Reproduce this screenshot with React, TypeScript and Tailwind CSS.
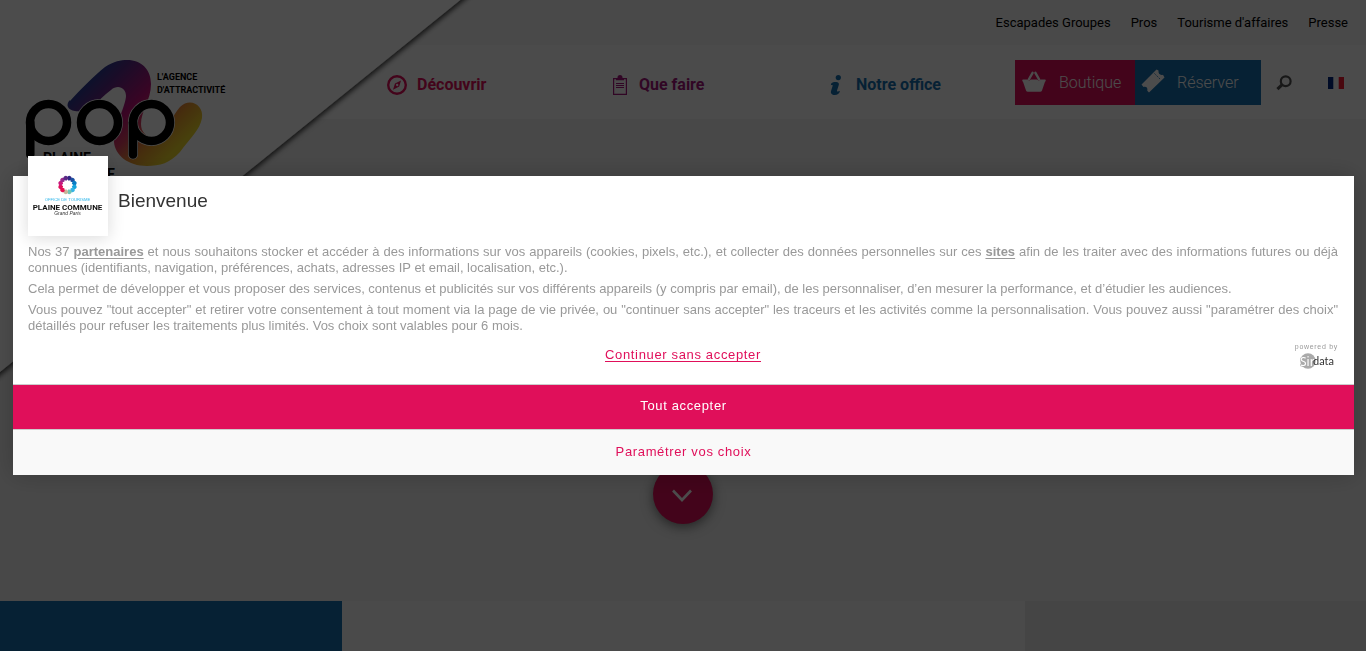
import type { ReactNode } from "react";

const topLinks = ["Escapades Groupes", "Pros", "Tourisme d'affaires", "Presse"];

const petals = [
  "#312783",
  "#1d4fa0",
  "#0a7cc4",
  "#16a3dc",
  "#35b4e5",
  "#72c3b5",
  "#c9b79a",
  "#e5104f",
  "#e00f5a",
  "#c9187c",
  "#9a2a8c",
  "#5b2a86"
];

export default function App() {
  return (
    <div className="relative flex min-h-screen flex-col overflow-hidden bg-[#f0f0f0] font-['Roboto',sans-serif]">
      <Header />
      <main className="flex flex-1 flex-col">
        <section className="flex min-h-[482px] items-end justify-center pb-[77px]">
          <button
            type="button"
            aria-label="Descendre"
            className="flex size-[60px] items-center justify-center rounded-full bg-[#e00f5a] shadow-[0_3px_12px_rgba(0,0,0,0.5)]"
          >
            <svg viewBox="0 0 20 14" className="mt-1 mr-0.5 h-3.5 w-5" fill="none" stroke="#fff" strokeWidth="2.6">
              <path d="M1 1.5 10 11 19 1.5" />
            </svg>
          </button>
        </section>
        <section className="grid flex-1 grid-cols-4">
          <div className="bg-[#176fae]" />
          <div className="col-span-2 bg-[#f9f9f9]" />
          <div className="bg-[#e8e8e8]" />
        </section>
      </main>
      <ConsentDialog />
    </div>
  );
}

function Header() {
  return (
    <header>
      <div className="flex h-[45px] items-center justify-end gap-5 bg-[#f5f5f5] pr-[18px] text-[13px] text-black">
        {topLinks.map((label) => (
          <a key={label} href="#">
            {label}
          </a>
        ))}
      </div>
      <div className="flex h-[74px] items-center bg-[#fbfbfb] pt-px">
        <nav className="flex flex-1 items-center justify-between pt-1 pr-[74px] pl-[387px] text-base font-bold">
          <NavLink label="Découvrir" className="gap-[10px] text-[#e00f5a]">
            <svg viewBox="0 0 20 20" className="size-5">
              <circle cx="10" cy="10" r="8.8" fill="none" stroke="currentColor" strokeWidth="2.4" />
              <path
                fill="currentColor"
                fillRule="evenodd"
                d="M14 5.5 12.2 11.6 6 14.8 8 8.4ZM10.1 8.8a1.2 1.2 0 1 0 .1 2.4 1.2 1.2 0 0 0-.1-2.4Z"
              />
            </svg>
          </NavLink>
          <NavLink label="Que faire" className="gap-[11px] text-[#a3177c]">
            <svg viewBox="0 0 16 20" className="h-5 w-4" fill="none" stroke="currentColor">
              <path strokeWidth="1.2" d="M1.600 3.600h12.800v15.800H1.600Z" />
              <path fill="currentColor" stroke="none" d="M4 5.200V3.300h1.500V2.500A2.500 2.500 0 0 1 10.500 2.500v.8H12v1.900Z" />
              <path strokeWidth="1" d="M4 8.500h8M4 10.500h8M4 12.500h8" />
            </svg>
          </NavLink>
          <NavLink label="Notre office" className="gap-[14px] text-[#176fae]">
            <svg viewBox="0 0 12 20" className="h-5 w-3" fill="currentColor">
              <circle cx="8.3" cy="2.6" r="2.6" />
              <path d="M1.2 8.5C3 6.800 5.500 6.700 7.500 7.200 9.500 7.800 9 9.700 8.400 11.300L7 15.400c-.3 1.100.8 1.300 3 .6-.6 2.600-2.700 4-5.200 4-3 0-4.500-1.600-3.700-4.200L2.600 11c.3-1-.4-1.200-1.800-.8Z" />
            </svg>
          </NavLink>
        </nav>
        <a href="#" className="flex h-[45px] w-[120px] items-center gap-[13px] bg-[#e00f5a] pl-[7px] text-base font-light text-white">
          <svg viewBox="0 0 24 22" className="mb-0.5 h-[22px] w-6">
            <path
              fill="#fff"
              d="M1 8.500h4.500c.5 1.500 2.500 1.500 3.200 0h6.600c.7 1.500 2.700 1.500 3.200 0H23c1 0 1 2 0 2.200L20 19.500a2 2 0 0 1-1.900 1.300H5.900A2 2 0 0 1 4 19.500L1 10.700C0 10.500 0 8.500 1 8.500Z"
            />
            <path fill="none" stroke="#fff" strokeWidth="2.400" strokeLinecap="round" d="M6.800 8.500 10.600 1.800M17.200 8.500 13.400 1.800" />
          </svg>
          Boutique
        </a>
        <a href="#" className="flex h-[45px] w-[126px] items-center gap-3 bg-[#176fae] pl-[6px] text-base font-light text-white">
          <svg viewBox="0 0 24 24" className="mb-1 size-6">
            <path
              fill="#fff"
              d="M15.500.5 17.500 1.500C17 4.500 19.200 6.700 22 5.700L23.500 8.500 8 23.500 6.300 21.800C6.800 19 5.500 17.300 2.500 18L.5 15.500Z"
            />
            <path fill="none" stroke="#176fae" strokeWidth="1" strokeDasharray="1.500 1.500" d="m13.500 4.500 6 6" />
          </svg>
          Réserver
        </a>
        <button type="button" aria-label="Rechercher" className="ml-[15px]">
          <svg viewBox="0 0 16 16" className="size-4" fill="none" stroke="#505050">
            <circle cx="9.700" cy="6.200" r="4.900" strokeWidth="2.200" />
            <path strokeWidth="3" d="M6.200 9.600 1.400 14.200" />
          </svg>
        </button>
        <a href="#" aria-label="Français" className="mr-[22px] ml-9">
          <svg viewBox="0 0 16 12" className="h-3 w-4">
            <path fill="#fff" d="M0 0h16v12H0Z" />
            <path fill="#00267f" d="M0 0h5.300v12H0Z" />
            <path fill="#f31830" d="M10.700 0H16v12h-5.300Z" />
          </svg>
        </a>
      </div>
      <Brand />
    </header>
  );
}

function NavLink({ label, className, children }: { label: string; className: string; children: ReactNode }) {
  return (
    <a href="#" className={`flex items-center ${className}`}>
      {children}
      {label}
    </a>
  );
}

/* White corner with the agency logo, laid over the header and the hero */
function Brand() {
  return (
    <a href="#" aria-label="POP, l'agence d'attractivité" className="absolute top-0 left-0">
      <svg viewBox="0 0 480 390" className="h-[390px] w-[480px]">
        <defs>
          <linearGradient id="ribbon" gradientUnits="userSpaceOnUse" x1="85" y1="85" x2="162" y2="162">
            <stop offset="0" stopColor="#2b3a92" />
            <stop offset="0.15" stopColor="#5b2a86" />
            <stop offset="0.45" stopColor="#c0107a" />
            <stop offset="0.62" stopColor="#d8405f" />
            <stop offset="0.8" stopColor="#e9962f" />
            <stop offset="1" stopColor="#efd52a" />
          </linearGradient>
          <filter id="fold" x="-5%" y="-5%" width="115%" height="115%">
            <feDropShadow dx="2" dy="2" stdDeviation="2.5" floodColor="#000" floodOpacity="0.7" />
          </filter>
        </defs>
        <path d="M-20-16H480L-20 388Z" fill="#fff" filter="url(#fold)" />
        <path
          fill="url(#ribbon)"
          d="M70 101C80 90 94 76 105 67c9-6 16-7 22-7 15 0 24 10 24 24 0 16-10 27-10 40 0 10 8 15 17 12 11-8 14-20 22-29 10-10 24-2 22 11-2 12-12 20-22 34-10 11-20 14-33 14-19 0-32-11-33-24-1-12 12-37 12-46 0-8-8-12-15-6-8 6-12 11-15 13-10 7-16 9-21 8-7-1-10-6-5-11Z"
        />
        <g fill="none" strokeLinecap="round">
          <g stroke="#fff" strokeWidth="10">
            <circle cx="99.500" cy="122.500" r="18.500" />
            <circle cx="151.500" cy="122.500" r="18.500" />
            <path d="M133 122.500v32" />
          </g>
          <g stroke="#000" strokeWidth="8.500">
            <circle cx="48.500" cy="122.500" r="18.500" />
            <path d="M30.300 122.500v32" />
            <circle cx="99.500" cy="122.500" r="18.500" />
            <circle cx="151.500" cy="122.500" r="18.500" />
            <path d="M133 122.500v32" />
          </g>
        </g>
        <g className="font-['Roboto',sans-serif] font-bold">
          <text x="157" y="80" fontSize="9">L'AGENCE</text>
          <text x="157" y="93" fontSize="9">D'ATTRACTIVITÉ</text>
          <text x="43" y="163" fontSize="14">PLAINE</text>
          <text x="115" y="179" fontSize="14" textAnchor="end">COMMUNE</text>
        </g>
      </svg>
    </a>
  );
}

function ConsentDialog() {
  return (
    <div className="fixed inset-0 flex items-center bg-black/70 pr-3 pl-[13px] font-['Liberation_Sans',Arial,sans-serif]">
      <div
        role="dialog"
        aria-labelledby="consent-title"
        className="relative w-full bg-white text-[13px] leading-4 shadow-[0_0_24px_rgba(0,0,0,0.2)]"
      >
        <OfficeLogo />
        <h1 id="consent-title" className="flex h-[50px] items-center pl-[105px] text-[19px] text-[#333]">
          Bienvenue
        </h1>
        <div className="space-y-[5px] pt-[18px] pr-4 pl-[15px] text-justify text-[#999]">
          <p>
            Nos 37{" "}
            <a href="#" className="font-bold underline underline-offset-2">
              partenaires
            </a>{" "}
            et nous souhaitons stocker et accéder à des informations sur vos appareils (cookies, pixels, etc.), et
            collecter des données personnelles sur ces{" "}
            <a href="#" className="font-bold underline underline-offset-2">
              sites
            </a>{" "}
            afin de les traiter avec des informations futures ou déjà connues (identifiants, navigation, préférences,
            achats, adresses IP et email, localisation, etc.).
          </p>
          <p>
            Cela permet de développer et vous proposer des services, contenus et publicités sur vos différents appareils
            (y compris par email), de les personnaliser, d’en mesurer la performance, et d’étudier les audiences.
          </p>
          <p>
            Vous pouvez "tout accepter" et retirer votre consentement à tout moment via la page de vie privée, ou
            "continuer sans accepter" les traceurs et les activités comme la personnalisation. Vous pouvez aussi
            "paramétrer des choix" détaillés pour refuser les traitements plus limités. Vos choix sont valables pour 6
            mois.
          </p>
        </div>
        <div className="grid h-[50px] grid-cols-[1fr_auto_1fr] items-center pr-4 pl-[15px]">
          <button
            type="button"
            className="col-start-2 mb-2 cursor-pointer border-b border-[#e00f5a] leading-[13px] tracking-wider text-[#e00f5a]"
          >
            Continuer sans accepter
          </button>
          <a
            href="#"
            className="mb-1.5 flex flex-col items-end justify-self-end text-[7px] leading-2 tracking-widest text-[#999]"
          >
            powered by
            <SirdataLogo />
          </a>
        </div>
        <button
          type="button"
          className="block h-[45px] w-full border-t border-[#ccc] bg-[#e00f5a] pb-0.5 tracking-wider text-white"
        >
          Tout accepter
        </button>
        <button
          type="button"
          className="block h-[46px] w-full border-t border-[#ccc] bg-[#f9f9f9] pb-0.5 tracking-wider text-[#e00f5a]"
        >
          Paramétrer vos choix
        </button>
      </div>
    </div>
  );
}

function OfficeLogo() {
  return (
    <div className="absolute -top-5 left-[15px] size-20 bg-white shadow-[0_2px_16px_rgba(0,0,0,0.15)]">
      <svg viewBox="0 0 80 80" className="size-20" role="img" aria-label="Office de tourisme Plaine Commune">
        {petals.map((color, i) => (
          <path
            key={color}
            fill={color}
            transform={`rotate(${i * 30 + 15} 39.500 29)`}
            d="M39.500 24.500 37.300 23a2.400 2.400 0 1 1 4.400 0Z"
          />
        ))}
        <g textAnchor="middle">
          <text x="39.500" y="45" fontSize="4.200" fill="#2bb5ea" className="font-['Liberation_Sans',sans-serif]">
            OFFICE DE TOURISME
          </text>
          <text x="39.500" y="53.500" fontSize="8" fill="#111" className="font-['Roboto',sans-serif] font-bold">
            PLAINE COMMUNE
          </text>
          <text x="39.500" y="59" fontSize="5" fill="#333" className="font-['Liberation_Sans',sans-serif] italic">
            Grand Paris
          </text>
        </g>
      </svg>
    </div>
  );
}

function SirdataLogo() {
  return (
    <svg viewBox="0 0 40 18" className="mt-px h-[18px] w-10" role="img" aria-label="Sirdata">
      <circle cx="10" cy="9" r="7.700" fill="#aaa" />
      <g className="font-['Noto_Sans',sans-serif] tracking-normal">
        <text x="2" y="13.500" fontSize="12" fill="#fff" stroke="#aaa" strokeWidth="1" paintOrder="stroke">
          Sir
        </text>
        <text x="15" y="13" fontSize="11" fill="#333" className="font-['Lato',sans-serif]">
          data
        </text>
      </g>
    </svg>
  );
}
